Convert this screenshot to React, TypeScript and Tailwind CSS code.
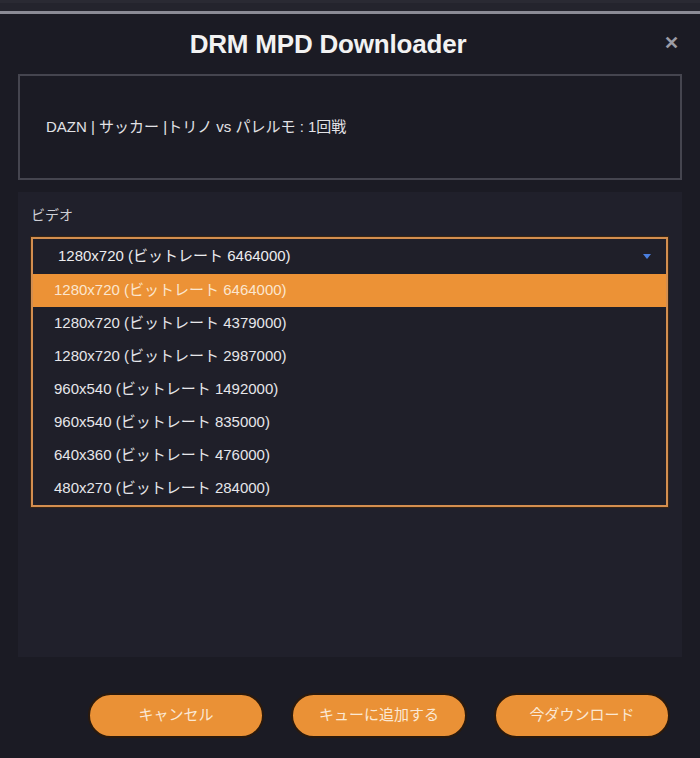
import React from "react";

const options = [
  "1280x720 (ビットレート 6464000)",
  "1280x720 (ビットレート 4379000)",
  "1280x720 (ビットレート 2987000)",
  "960x540 (ビットレート 1492000)",
  "960x540 (ビットレート 835000)",
  "640x360 (ビットレート 476000)",
  "480x270 (ビットレート 284000)",
];

export default function App() {
  const font = { fontFamily: '"Liberation Sans", "Noto Sans CJK JP", sans-serif' };
  return (
    <div className="w-[700px] h-[758px] bg-[#1b1b24] flex flex-col overflow-hidden" style={font}>
      <div className="h-[11px] bg-[#24242d] border-t-[3px] border-[#2a2a33]" />
      <div className="h-[3px] bg-[#8b8b95]" />
      <div className="relative h-[60px] flex items-center justify-center pr-[44px]">
        <div className="text-[26px] font-bold text-[#f2f2f2] tracking-[-0.2px]">DRM MPD Downloader</div>
        <div className="absolute right-[21px] top-[20px] text-[#9c9ca6] text-[18px] font-bold leading-none">✕</div>
      </div>
      <div className="mx-[18px] h-[106px] border-2 border-[#45454f] flex items-center pl-[26px]">
        <span className="text-[15px] text-[#e2e2e6]">DAZN | サッカー |トリノ vs パレルモ : 1回戦</span>
      </div>
      <div className="mx-[18px] mt-[12px] h-[465px] bg-[#20202b] pt-[12px] px-[13px]">
        <div className="text-[14px] text-[#cfcfd6] h-[22px] leading-[22px]">ビデオ</div>
        <div className="mt-[11px] w-[637px] border-2 border-[#d38e4f] shadow-[0_0_0_1px_#3a2614]">
          <div className="h-[35px] flex items-center justify-between pl-[25px] pr-[14px] bg-[#1f1f29]">
            <span className="text-[15px] text-[#ececef]">{options[0]}</span>
            <svg width="10" height="7" viewBox="0 0 10 7"><path d="M1 1 L9 1 L5 6 Z" fill="#4a7fe0" /></svg>
          </div>
          {options.map((o, i) => (
            <div
              key={o}
              className={
                i === 0
                  ? "h-[33px] flex items-center pl-[21px] bg-[#ec9236] text-[#fbe6cf]"
                  : "h-[33px] flex items-center pl-[21px] bg-[#1f1f29] text-[#e6e6ea]"
              }
            >
              <span className="text-[15px]">{o}</span>
            </div>
          ))}
        </div>
      </div>
      <div className="flex gap-[27px] justify-end pr-[30px] mt-[36px]">
        {["キャンセル", "キューに追加する", "今ダウンロード"].map((t) => (
          <div
            key={t}
            className="w-[176px] h-[45px] rounded-full bg-[#ea9136] border-2 border-[#2b1a0d] flex items-center justify-center text-[15px] text-[#fbe8d4]"
          >
            {t}
          </div>
        ))}
      </div>
    </div>
  );
}
